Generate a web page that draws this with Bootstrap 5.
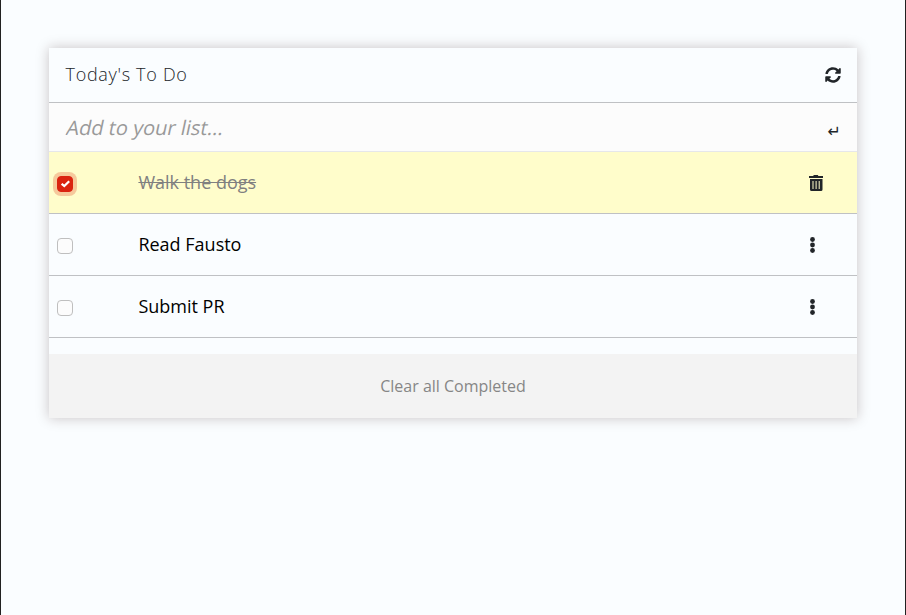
<!DOCTYPE html>
<html lang="en">
<head>
<meta charset="utf-8">
<meta name="viewport" content="width=device-width, initial-scale=1">
<title>Today's To Do</title>
<link href="https://cdn.jsdelivr.net/npm/bootstrap@5.3.0/dist/css/bootstrap.min.css" rel="stylesheet">
<style>
body{font-family:"Open Sans",sans-serif;background:#fafdff;color:#212529}
.page{border:solid #212121;border-width:0 1px}
.todo{box-shadow:0 0 12px 0 rgba(50,20,20,.25);background:#fafdff}
.title-bar{height:55px;border-bottom:1px solid #bfc1c4}
.title-bar h1{font-size:18px;font-weight:300;letter-spacing:.7px;line-height:27px;padding:0 0 2px .5px;color:#212529}
.entry{height:49px;background:#fcfcfc;border-bottom:1px solid #e6e7ea}
.entry input{font-size:20px;line-height:30px;outline:0;color:#212529;transform:skewX(-12deg);padding:2px 0 0 2px}
.entry input::placeholder{color:#999;opacity:1}
.enter-key{font:16px/24px "DejaVu Sans",sans-serif;padding-top:9px}
.task{height:62px;border-bottom:1px solid #bfc1c4;font-size:18px;color:#000}
.task .tick{width:16px;height:16px;margin:2px 65px 0 8px;background-color:#fcfcfc;border:1px solid #bfbfbf;border-radius:4px}
.task svg{color:#212529}
.task.done{background-color:#fffdcb;color:#808080}
.task.done .tick{background-color:#da2310;border-color:#da2310;box-shadow:0 0 0 4px #f6c99c;background-image:none}
.tick-wrap{width:89px;padding-left:0}
.tick-wrap svg{left:12px;top:6px;width:9px;height:8px}
.task-text{padding-left:.4px}
.clear-bar{height:64px;background:#f3f3f3;font-size:16px;color:#868686}
</style>
<script src="https://cdn.jsdelivr.net/npm/bootstrap@5.3.0/dist/js/bootstrap.bundle.min.js"></script>
</head>
<body>
<main class="page min-vh-100 p-5">
 <section class="todo">
  <header class="title-bar d-flex align-items-center justify-content-between px-3">
   <h1 class="m-0">Today's To Do</h1>
   <button class="btn p-0 border-0 d-flex" aria-label="Refresh"><svg width="16" height="16" viewBox="0 0 512 512" fill="currentColor"><path d="M370.72 133.28C339.458 104.008 298.888 87.962 255.848 88c-77.458.068-144.328 53.178-162.791 126.85-1.344 5.363-6.122 9.15-11.651 9.15H24.103c-7.498 0-13.194-6.807-11.807-14.176C33.933 94.924 134.813 8 256 8c66.448 0 126.791 26.136 171.315 68.685L463.03 40.97C478.149 25.851 504 36.559 504 57.941V192c0 13.255-10.745 24-24 24H345.941c-21.382 0-32.09-25.851-16.971-40.971l41.75-41.749zM32 296h134.059c21.382 0 32.09 25.851 16.971 40.971l-41.75 41.75c31.262 29.273 71.835 45.319 114.876 45.28 77.418-.07 144.315-53.144 162.787-126.849 1.344-5.363 6.122-9.15 11.651-9.15h57.304c7.498 0 13.194 6.807 11.807 14.176C478.067 417.076 377.187 504 256 504c-66.448 0-126.791-26.136-171.315-68.685L48.97 471.03C33.851 486.149 8 475.441 8 454.059V320c0-13.255 10.745-24 24-24z"/></svg></button>
  </header>
  <div class="entry d-flex align-items-center px-3">
   <input class="border-0 bg-transparent w-50" placeholder="Add to your list..." aria-label="New task">
   <span class="enter-key ms-auto">↵</span>
  </div>
  <div class="task done d-flex align-items-center">
   <div class="tick-wrap d-flex position-relative"><input class="form-check-input tick" type="checkbox" checked aria-label="Walk the dogs"><svg class="position-absolute" viewBox="0 0 9 8" fill="none"><path d="M.7 3.800 3.300 6.100 8.200 1.300" stroke="#fff" stroke-width="2.200"/></svg></div>
   <span class="task-text flex-grow-1 text-decoration-line-through">Walk the dogs</span>
   <svg class="me-4" width="32" height="16" viewBox="0 0 32 16" fill="currentColor"><path d="M8 1h4.200l.6-1h4l.6 1H22v2H8zM9 4h12.500v10.500q0 1.500-1.500 1.500h-9.500Q9 16 9 14.500z"/><path d="M11.500 6h1v8h-1zM14.600 6h1v8h-1zM17.700 6h1v8h-1z" fill="#fffdcb"/></svg>
  </div>
  <div class="task d-flex align-items-center">
   <div class="tick-wrap d-flex"><input class="form-check-input tick" type="checkbox" aria-label="Read Fausto"></div>
   <span class="task-text flex-grow-1">Read Fausto</span>
   <svg class="me-4" width="32" height="16" viewBox="0 0 32 16" fill="currentColor"><circle cx="11.500" cy="2.500" r="2.400"/><circle cx="11.500" cy="8" r="2.400"/><circle cx="11.500" cy="13.500" r="2.400"/></svg>
  </div>
  <div class="task d-flex align-items-center">
   <div class="tick-wrap d-flex"><input class="form-check-input tick" type="checkbox" aria-label="Submit PR"></div>
   <span class="task-text flex-grow-1">Submit PR</span>
   <svg class="me-4" width="32" height="16" viewBox="0 0 32 16" fill="currentColor"><circle cx="11.500" cy="2.500" r="2.400"/><circle cx="11.500" cy="8" r="2.400"/><circle cx="11.500" cy="13.500" r="2.400"/></svg>
  </div>
  <footer class="clear-bar d-flex align-items-center justify-content-center mt-3">Clear all Completed</footer>
 </section>
</main>
</body>
</html>
